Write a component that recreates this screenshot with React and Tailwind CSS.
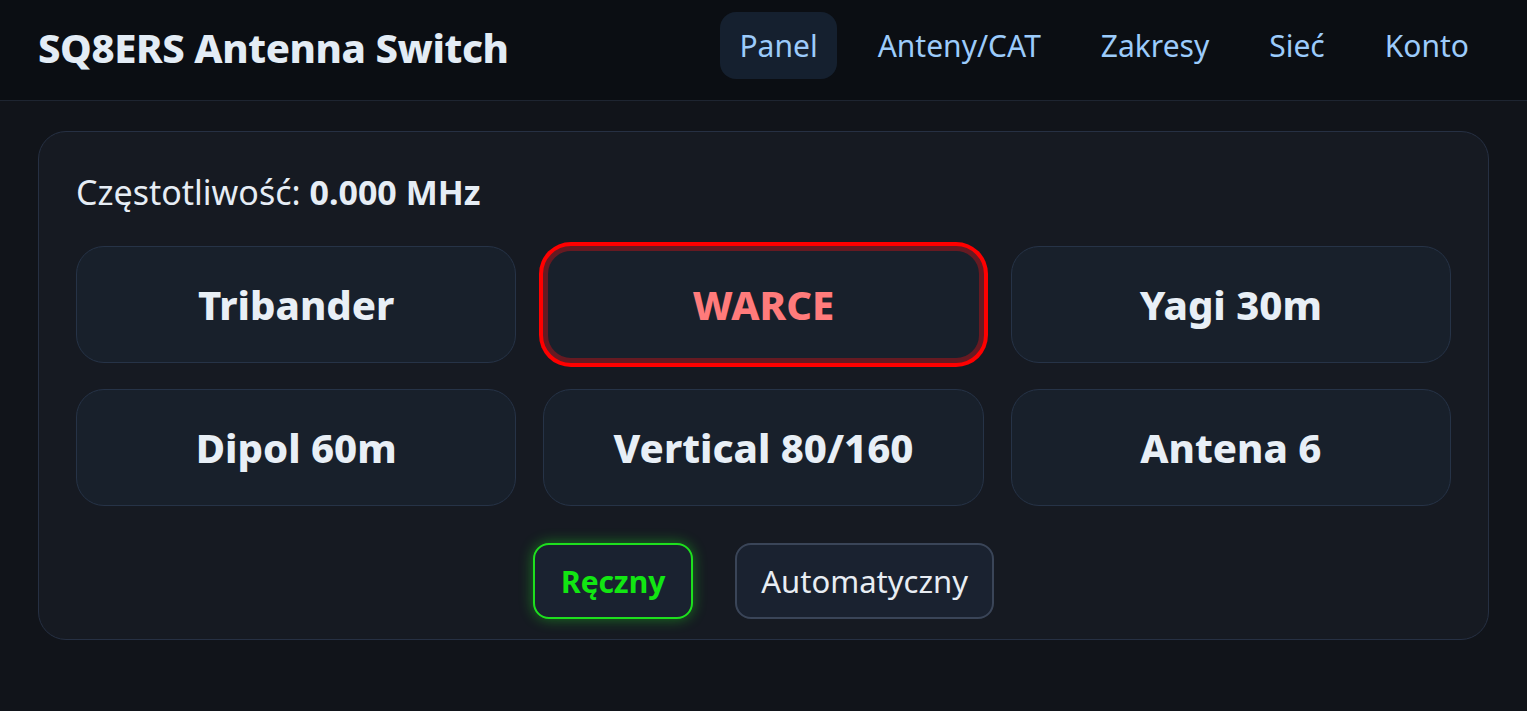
import React, { useState } from 'react';

const antennas = ['Tribander', 'WARCE', 'Yagi 30m', 'Dipol 60m', 'Vertical 80/160', 'Antena 6'];
const navItems = ['Panel', 'Anteny/CAT', 'Zakresy', 'Sieć', 'Konto'];

function App() {
  const [active, setActive] = useState('WARCE');
  const [mode, setMode] = useState('manual');

  return (
    <div className="min-h-screen bg-[#11141a] text-[#e6edf5]" style={{ fontFamily: '"Noto Sans", "Open Sans", sans-serif' }}>
      <header className="h-[101px] flex items-center justify-between pl-[38px] pr-[39px] bg-[#0b0e13] border-b border-[#1e2531]">
        <h1 className="text-[40px] leading-none font-extrabold text-[#e3ecf5] tracking-[-0.4px] -mt-[4px]">SQ8ERS Antenna Switch</h1>
        <nav className="flex gap-[22px] -mt-[10px]">
          {navItems.map((item) => (
            <a
              key={item}
              className={`h-[67px] px-[19px] flex items-center rounded-2xl text-[30px] text-[#9ccbfb] ${item === 'Panel' ? 'bg-[#15202f]' : ''}`}
            >
              {item}
            </a>
          ))}
        </nav>
      </header>

      <main className="px-[38px] pt-[30px]">
        {/* main panel */}
        <div className="rounded-[28px] border border-[#263043] bg-[#161a22] px-[37px] pt-[43px] pb-[20px]">
          <p className="text-[34px] leading-none text-[#e6edf5]">
            Częstotliwość: <span className="font-bold">0.000 MHz</span>
          </p>

          <div className="grid grid-cols-3 gap-x-[27px] gap-y-[26px] mt-[37px]">
            {antennas.map((name) => (
              <button
                key={name}
                onClick={() => setActive(name)}
                className={`h-[117px] rounded-[28px] bg-[#18202b] text-[40px] font-extrabold ${
                  active === name
                    ? 'border-[5px] border-[#661a22] ring-[4px] ring-[#ff0000] text-[#ff7b7b]'
                    : 'border border-[#263347] text-[#e8eff6]'
                }`}
              >
                {name}
              </button>
            ))}
          </div>

          <div className="flex justify-center gap-[42px] mt-[37px]">
            <button
              onClick={() => setMode('manual')}
              className={`h-[76px] px-[26px] rounded-2xl bg-[#1a2230] text-[30px] ${
                mode === 'manual'
                  ? 'border-2 border-[#1ee01e] text-[#12e612] font-bold shadow-[0_0_14px_rgba(30,230,30,0.45)]'
                  : 'border-2 border-[#3a4558] text-[#e8edf3]'
              }`}
            >
              Ręczny
            </button>
            <button
              onClick={() => setMode('auto')}
              className={`h-[76px] px-[24px] rounded-2xl bg-[#1a2230] text-[31px] ${
                mode === 'auto'
                  ? 'border-2 border-[#1ee01e] text-[#12e612] font-bold shadow-[0_0_14px_rgba(30,230,30,0.45)]'
                  : 'border-2 border-[#3a4558] text-[#e8edf3]'
              }`}
            >
              Automatyczny
            </button>
          </div>
        </div>
      </main>
    </div>
  );
}

export default App;
